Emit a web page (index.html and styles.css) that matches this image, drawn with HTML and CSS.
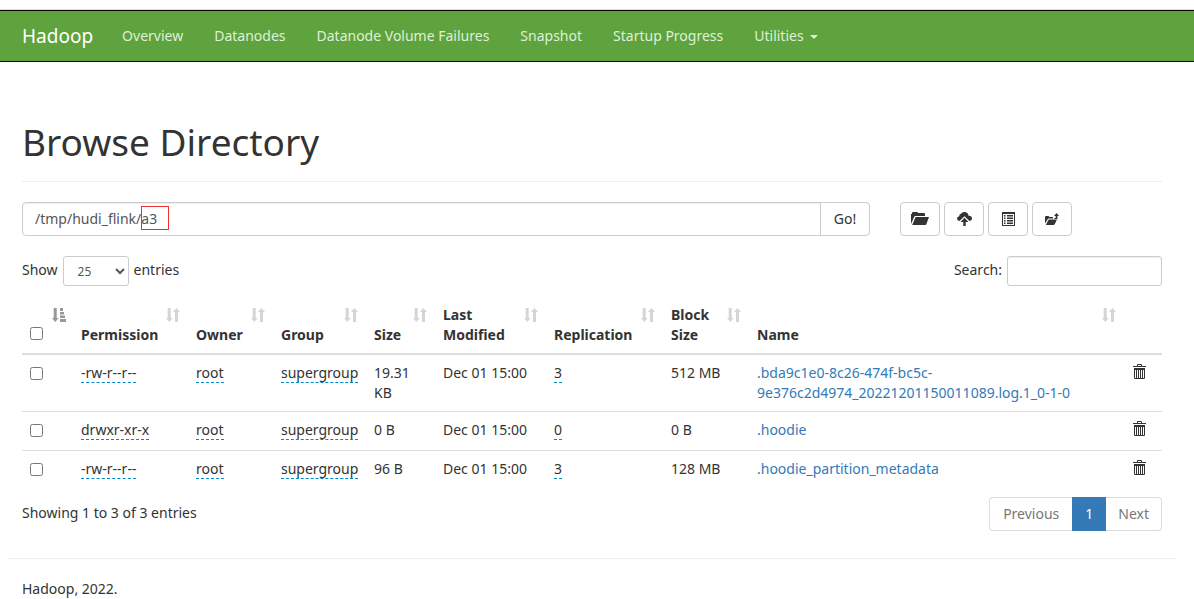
FILE: index.html
```html
<!DOCTYPE html>
<html lang="en">
<head>
<meta charset="utf-8">
<title>Browsing HDFS</title>
<link rel="stylesheet" href="styles.css">
</head>
<body>
<svg class="sprite" aria-hidden="true">
  <symbol id="sort" viewBox="0 0 14 14"><path d="M1.700 0h3v10h2L3.300 14 0 10h1.700zM9 14V4H7l3.400-4L14 4h-2v10z"/></symbol>
  <symbol id="sort-asc" viewBox="0 0 14 14"><path d="M1.700 0h3v10h2L3.300 14 0 10h1.700zM8 0h3v3H8zM8 4h4v2.500H8zM8 7.500h5v2.500H8zM8 11h6v3H8z"/></symbol>
  <symbol id="trash" viewBox="0 0 13 15"><path d="M4 2V1q0-1 1-1h3q1 0 1 1v1h4v1H0V2zM5 2h3V1H5zM1 4h11v10q0 1-1 1H2q-1 0-1-1zm1 2v8h1V6zm2 0v8h1V6zm2 0v8h1V6zm2 0v8h1V6zm2 0v8h1V6z" fill-rule="evenodd"/></symbol>
</svg>
<header class="navbar">
  <a class="brand" href="#">Hadoop</a>
  <nav class="links">
    <a href="#">Overview</a>
    <a href="#">Datanodes</a>
    <a href="#">Datanode Volume Failures</a>
    <a href="#">Snapshot</a>
    <a href="#">Startup Progress</a>
    <a href="#">Utilities <span class="caret"></span></a>
  </nav>
</header>
<main class="container">
  <h1>Browse Directory</h1>
  <div class="toolbar">
    <form class="path">
      <input type="text" value="/tmp/hudi_flink/a3" aria-label="Directory">
      <button type="button">Go!</button>
      <span class="mark"></span>
    </form>
    <div class="actions">
      <button type="button" aria-label="Create directory"><svg width="18" height="14" viewBox="0 0 18 14"><path d="M0 12V2h1V1q0-1 1-1h4q1 0 1 1h6q1 0 1 1v2H4.500q-1 0-1.400 1zM4.600 5H18l-2.700 7.200q-.3.800-1.100.8H1.200z"/></svg></button>
      <button type="button" aria-label="Upload files"><svg width="15" height="14" viewBox="0 0 15 14"><path d="M2.500 9Q0 8.800 0 6.600 0 4.700 2.200 4.300 2 1.700 4.300 1.400 5.500 0 7.500 0q3.300 0 4.100 3.700Q15 3.600 15 6.500 15 8.800 12.500 9L7.500 4.200zM7.500 5.800l4 4.200H8.700v4H6.300v-4H3.500z"/></svg></button>
      <button type="button" aria-label="Cut and paste"><svg width="13" height="14" viewBox="0 0 13 14"><path fill-rule="evenodd" d="M0 0h13v14H0zM1 2v11h11V2zM2 3h1.500v1.500H2zM5 3h6v1.500H5zM2 5.500h1.500V7H2zM5 5.500h6V7H5zM2 8h1.500v1.500H2zM5 8h6v1.500H5zM2 10.500h1.500V12H2zM5 10.500h6V12H5z"/></svg></button>
      <button type="button" aria-label="Parent directory"><svg width="14" height="12" viewBox="0 0 14 12"><path d="M0 10.500V4q0-1 1-1h2.500l1 1H8v1.500H3.200zM3.700 6.500H12L9.800 11q-.4 1-1.300 1H.8zM11.500 0 14 3h-1.600v3H9.500V5h1.200V3H9z"/></svg></button>
    </div>
  </div>
  <div class="controls">
    <label>Show <select><option>25</option></select> entries</label>
    <label>Search: <input type="search"></label>
  </div>
  <table>
    <colgroup><col class="c-check"><col class="c-perm"><col class="c-owner"><col class="c-group"><col class="c-size"><col class="c-mod"><col class="c-rep"><col class="c-block"><col><col class="c-del"></colgroup>
    <thead>
      <tr>
        <th><input type="checkbox" aria-label="Select all"><svg class="sort active"><use href="#sort-asc"/></svg></th>
        <th>Permission<svg class="sort"><use href="#sort"/></svg></th>
        <th>Owner<svg class="sort"><use href="#sort"/></svg></th>
        <th>Group<svg class="sort"><use href="#sort"/></svg></th>
        <th>Size<svg class="sort"><use href="#sort"/></svg></th>
        <th>Last Modified<svg class="sort"><use href="#sort"/></svg></th>
        <th>Replication<svg class="sort"><use href="#sort"/></svg></th>
        <th>Block Size<svg class="sort"><use href="#sort"/></svg></th>
        <th>Name<svg class="sort"><use href="#sort"/></svg></th>
        <th></th>
      </tr>
    </thead>
    <tbody>
      <tr>
        <td><input type="checkbox" aria-label="Select log file"></td>
        <td><span class="edit">-rw-r--r--</span></td><td><span class="edit">root</span></td><td><span class="edit">supergroup</span></td>
        <td>19.31 KB</td><td>Dec 01 15:00</td><td><span class="edit">3</span></td><td>512 MB</td>
        <td><a href="#">.bda9c1e0-8c26-474f-bc5c-9e376c2d4974_20221201150011089.log.1_0-1-0</a></td>
        <td><button class="del" type="button" aria-label="Delete"><svg><use href="#trash"/></svg></button></td>
      </tr>
      <tr>
        <td><input type="checkbox" aria-label="Select .hoodie"></td>
        <td><span class="edit">drwxr-xr-x</span></td><td><span class="edit">root</span></td><td><span class="edit">supergroup</span></td>
        <td>0 B</td><td>Dec 01 15:00</td><td><span class="edit">0</span></td><td>0 B</td>
        <td><a href="#">.hoodie</a></td>
        <td><button class="del" type="button" aria-label="Delete"><svg><use href="#trash"/></svg></button></td>
      </tr>
      <tr>
        <td><input type="checkbox" aria-label="Select .hoodie_partition_metadata"></td>
        <td><span class="edit">-rw-r--r--</span></td><td><span class="edit">root</span></td><td><span class="edit">supergroup</span></td>
        <td>96 B</td><td>Dec 01 15:00</td><td><span class="edit">3</span></td><td>128 MB</td>
        <td><a href="#">.hoodie_partition_metadata</a></td>
        <td><button class="del" type="button" aria-label="Delete"><svg><use href="#trash"/></svg></button></td>
      </tr>
    </tbody>
  </table>
  <div class="summary">
    <p>Showing 1 to 3 of 3 entries</p>
    <div class="pages"><button type="button">Previous</button><button class="current" type="button">1</button><button type="button">Next</button></div>
  </div>
</main>
<footer>Hadoop, 2022.</footer>
</body>
</html>
```
FILE: styles.css
```css
* { box-sizing: border-box; }
body {
  margin: 0;
  padding-top: 10px;
  background: #fff;
  color: #333;
  font: 14px/20px "Noto Sans", "Open Sans", sans-serif;
}
button, input, select { font: inherit; color: inherit; margin: 0; }
a { color: #337ab7; text-decoration: none; }
svg { fill: currentColor; }
.sprite { position: absolute; width: 0; height: 0; }

.navbar {
  display: flex;
  align-items: center;
  height: 52px;
  padding-left: 22px;
  gap: 29px;
  background: #5fa33e;
  border-top: 1px solid #080808;
  border-bottom: 1px solid #080808;
  box-shadow: 0 -1px #ddd;
}
.navbar a { color: #dff0d8; white-space: nowrap; }
.navbar .brand { color: #fff; font-size: 19px; }
.links { display: flex; gap: 31px; }
.caret {
  display: inline-block;
  margin-left: 3px;
  vertical-align: middle;
  border: 4px solid transparent;
  border-top-color: currentColor;
  border-bottom: 0;
}

.container { padding: 58px 32px 0 22px; }
h1 {
  margin: 0 0 20px;
  padding-bottom: 17px;
  border-bottom: 1px solid #eee;
  font-size: 37px;
  line-height: 44px;
  font-weight: 400;
}
.toolbar { display: flex; gap: 30px; }
.path { position: relative; display: flex; flex: 0 1 848px; height: 34px; }
.path input {
  flex: 1;
  min-width: 0;
  padding: 6px 12px;
  color: #555;
  background: #fff;
  border: 1px solid #ccc;
  border-radius: 4px 0 0 4px;
  box-shadow: inset 0 1px 1px rgba(0, 0, 0, .075);
}
.path button {
  width: 50px;
  margin-left: -1px;
  padding: 0;
  background: #fff;
  border: 1px solid #ccc;
  border-radius: 0 4px 4px 0;
}
.mark { position: absolute; left: 119px; top: 4px; width: 28px; height: 24px; border: 1px solid #f03030; }
.actions { display: flex; gap: 4px; }
.actions button {
  display: flex;
  align-items: center;
  justify-content: center;
  width: 40px;
  height: 34px;
  padding: 0;
  background: #fff;
  border: 1px solid #ccc;
  border-radius: 4px;
}

.controls { display: flex; justify-content: space-between; margin-top: 20px; }
.controls label { display: flex; gap: 5px; line-height: 28px; }
.controls select, .controls input {
  height: 30px;
  background: #fff;
  border: 1px solid #ccc;
  border-radius: 3px;
  color: #555;
  font-size: 12px;
}
.controls select { width: 66px; padding: 0 0 0 10px; }
.controls input { width: 155px; box-shadow: inset 0 1px 1px rgba(0, 0, 0, .075); }

table { width: 100%; margin-top: 11px; table-layout: fixed; border-collapse: collapse; }
.c-check { width: 51px; }
.c-perm { width: 115px; }
.c-owner { width: 85px; }
.c-group { width: 93px; }
.c-size { width: 69px; }
.c-mod { width: 111px; }
.c-rep { width: 117px; }
.c-block { width: 86px; }
.c-del { width: 38px; }
th {
  position: relative;
  padding: 8px 30px 8px 8px;
  text-align: left;
  vertical-align: bottom;
  font-weight: 700;
  border-bottom: 2px solid #ddd;
}
td { height: 39px; padding: 8px; vertical-align: top; border-top: 1px solid #ddd; }
td:nth-child(9) { padding-right: 30px; }
input[type="checkbox"] { display: block; width: 13px; height: 13px; margin: 4px 0 3px; }
th input[type="checkbox"] { margin-bottom: 5px; }
.sort { position: absolute; right: 8px; top: 11px; width: 14px; height: 14px; opacity: .2; }
.sort.active { opacity: .5; }
th:first-child .sort { right: 7px; }
.edit { border-bottom: 1px dashed #08c; }
.del { display: block; margin: 1px; padding: 0; border: 0; background: none; }
.del svg { display: block; width: 13px; height: 15px; }

.summary { display: flex; justify-content: space-between; align-items: flex-start; margin-top: 7px; }
.summary p { margin: 6px 0 0; }
.pages { display: flex; }
.pages button {
  height: 34px;
  padding: 0 13px;
  color: #777;
  background: #fff;
  border: 1px solid #ddd;
}
.pages button:first-child { border-radius: 4px 0 0 4px; border-right: 0; }
.pages button:last-child { padding: 0 12px; border-radius: 0 4px 4px 0; border-left: 0; }
.pages .current { padding: 0 12px; color: #fff; background: #337ab7; border-color: #337ab7; }

footer { margin: 27px 17px 0 7px; padding: 20px 15px 0; border-top: 1px solid #eee; }
```
